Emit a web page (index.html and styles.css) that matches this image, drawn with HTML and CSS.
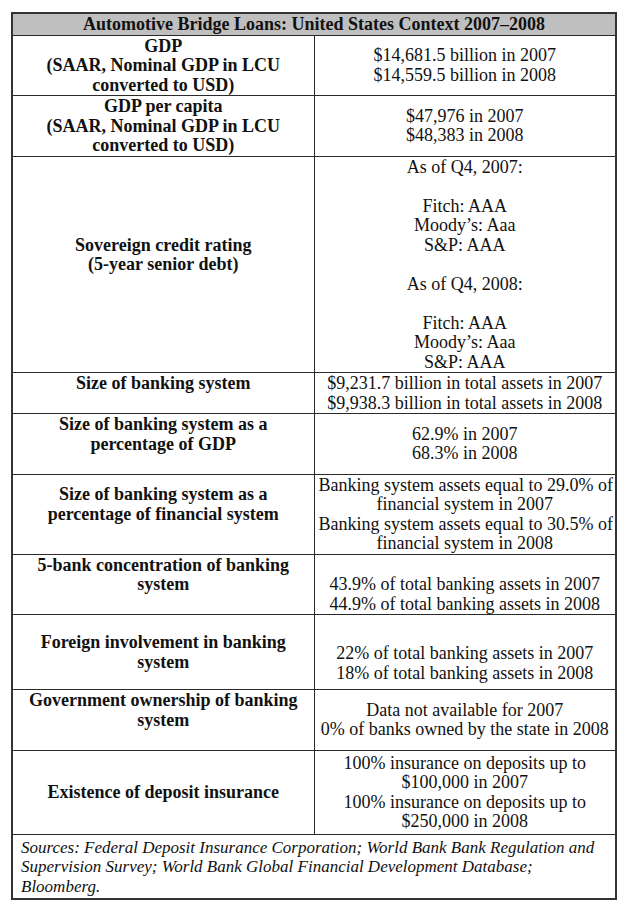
FILE: index.html
```html
<!DOCTYPE html>
<html lang="en">
<head>
  <meta charset="UTF-8">
  <meta name="viewport" content="width=device-width, initial-scale=1.0">
  <title>Automotive Bridge Loans: United States Context 2007–2008</title>
  <link rel="stylesheet" href="styles.css">
</head>
<body>
  <!-- Tabela de contexto -->
  <table class="context">
    <tr>
      <th colspan="2" class="title">Automotive Bridge Loans: United States Context 2007–2008</th>
    </tr>
    <tr>
      <th class="label">GDP<br>(SAAR, Nominal GDP in LCU<br>converted to USD)</th>
      <td class="value">$14,681.5 billion in 2007<br>$14,559.5 billion in 2008</td>
    </tr>
    <tr>
      <th class="label">GDP per capita<br>(SAAR, Nominal GDP in LCU<br>converted to USD)</th>
      <td class="value">$47,976 in 2007<br>$48,383 in 2008</td>
    </tr>
    <tr>
      <th class="label lifted">Sovereign credit rating<br>(5-year senior debt)</th>
      <td class="value">As of Q4, 2007:<br><br>Fitch: AAA<br>Moody’s: Aaa<br>S&amp;P: AAA<br><br>As of Q4, 2008:<br><br>Fitch: AAA<br>Moody’s: Aaa<br>S&amp;P: AAA</td>
    </tr>
    <tr>
      <th class="label lifted">Size of banking system</th>
      <td class="value">$9,231.7 billion in total assets in 2007<br>$9,938.3 billion in total assets in 2008</td>
    </tr>
    <tr>
      <th class="label lifted">Size of banking system as a<br>percentage of GDP</th>
      <td class="value">62.9% in 2007<br>68.3% in 2008</td>
    </tr>
    <tr>
      <th class="label lifted">Size of banking system as a<br>percentage of financial system</th>
      <td class="value">Banking system assets equal to 29.0% of<br>financial system in 2007<br>Banking system assets equal to 30.5% of<br>financial system in 2008</td>
    </tr>
    <tr>
      <th class="label lifted">5-bank concentration of banking<br>system</th>
      <td class="value low">43.9% of total banking assets in 2007<br>44.9% of total banking assets in 2008</td>
    </tr>
    <tr class="foreign">
      <th class="label">Foreign involvement in banking<br>system</th>
      <td class="value low">22% of total banking assets in 2007<br>18% of total banking assets in 2008</td>
    </tr>
    <tr>
      <th class="label lifted">Government ownership of banking<br>system</th>
      <td class="value">Data not available for 2007<br>0% of banks owned by the state in 2008</td>
    </tr>
    <tr class="deposit">
      <th class="label">Existence of deposit insurance</th>
      <td class="value">100% insurance on deposits up to<br>$100,000 in 2007<br>100% insurance on deposits up to<br>$250,000 in 2008</td>
    </tr>
    <tr>
      <td colspan="2" class="sources">Sources: Federal Deposit Insurance Corporation; World Bank Bank Regulation and<br>Supervision Survey; World Bank Global Financial Development Database;<br>Bloomberg.</td>
    </tr>
  </table>
</body>
</html>
```

FILE: styles.css
```css
body {
  margin: 0;
  padding: 12px 0 0 11px;
  background-color: #fff;
  color: #111;
  font-family: "Liberation Serif", "Times New Roman", serif;
  font-size: 18px;
  line-height: 19.5px;
}

.context {
  width: 606px;
  border-collapse: collapse;
  table-layout: fixed;
  border: 2px solid #333;
}

.context th,
.context td {
  border: 1px solid #2a2a2a;
  padding: 1px 4px 0;
  white-space: nowrap;
  text-align: center;
  vertical-align: middle;
}

.title {
  background-color: #bfbfbf;
  font-weight: bold;
  padding: 0 4px;
}

.label {
  width: 292px;
  font-weight: bold;
}

/* deixa uma linha vazia embaixo, como no documento original */
.label.lifted {
  padding-bottom: 19.5px;
}

.value.low {
  vertical-align: bottom;
}

.foreign {
  height: 75px;
}

.foreign .value {
  padding-bottom: 6px;
}

.deposit {
  height: 84px;
}

.context .sources {
  text-align: left;
  vertical-align: top;
  font-style: italic;
  font-size: 17px;
  padding: 3px 8px 2px;
}
```
